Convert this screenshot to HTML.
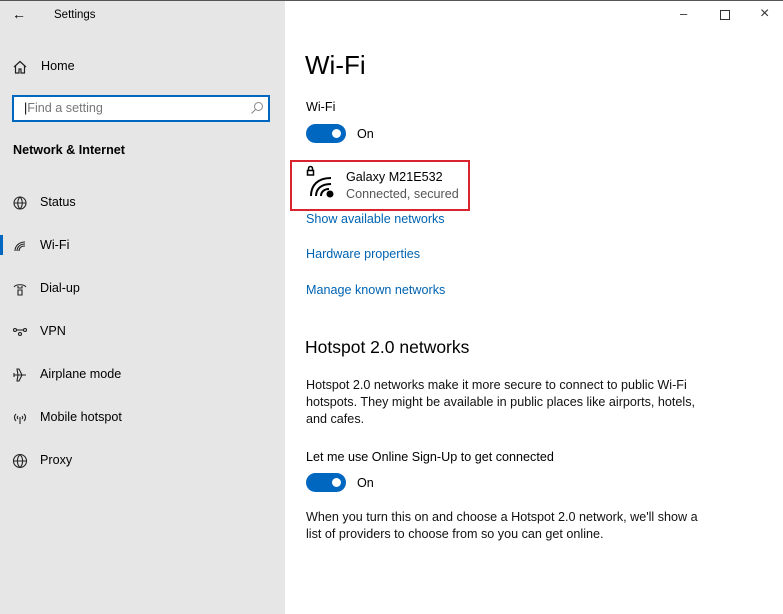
<!DOCTYPE html>
<html><head><style>
*{margin:0;padding:0;box-sizing:border-box}
body{width:783px;height:614px;overflow:hidden;font-family:"Liberation Sans",sans-serif;background:#fff;position:relative;color:#000}
.side{position:absolute;left:0;top:0;width:285px;height:614px;background:#e6e6e6;border-top:1px solid #555}
.top{position:absolute;left:285px;top:0;right:0;height:1px;background:#555}
.a{position:absolute;white-space:nowrap}
.s{font-size:12.6px}
.nav{font-size:12.6px;left:40px}
.ic{position:absolute;left:12px;width:16px;height:16px}
.link{color:#0063b1;font-size:12.6px;left:306px}
.tg{position:absolute;left:306px;width:40px;height:19px;border-radius:10px;background:#0067c0}
.tg:after{content:"";position:absolute;right:5px;top:5px;width:9px;height:9px;border-radius:50%;background:#fff}
p.a{font-size:12.6px;line-height:17px;color:#111}
</style></head><body>
<div class="side"></div><div class="top"></div>
<div class="a" style="left:12px;top:6px;font-size:14px">&#8592;</div>
<div class="a" style="left:54px;top:9px;font-size:11.5px">Settings</div>
<svg class="ic" style="top:59px" viewBox="0 0 16 16" fill="none" stroke="#222" stroke-width="1.2"><path d="M2 8 8 2.5 14 8M3.5 7v7h3.5v-4h2v4h3.5V7"/></svg>
<div class="a s" style="left:41px;top:59px">Home</div>
<div class="a" style="left:12px;top:95px;width:258px;height:27px;border:2px solid #0067c0;background:#fff"></div>
<div class="a" style="left:24px;top:101px;font-size:12.6px;color:#777"><span style="color:#000">|</span>Find a setting</div>
<svg class="a" style="left:250px;top:101px" width="14" height="14" viewBox="0 0 14 14" fill="none" stroke="#888"><circle cx="8.5" cy="5.5" r="4"/><path d="M5.5 8.5 1.5 12.5"/></svg>
<div class="a" style="left:13px;top:143px;font-size:12.6px;font-weight:bold">Network &amp; Internet</div>
<svg class="ic" style="top:195px" viewBox="0 0 16 16" fill="none" stroke="#222" stroke-width="1.1"><circle cx="8" cy="8" r="6"/><path d="M2 8h12M8 2c-3 3-3 9 0 12M8 2c3 3 3 9 0 12"/></svg>
<div class="a nav" style="top:195px">Status</div>
<div class="a" style="left:0;top:235px;width:3px;height:20px;background:#0067c0"></div>
<svg class="ic" style="top:238px" viewBox="0 0 16 16" fill="none" stroke="#222" stroke-width="1.1"><path d="M3 13c0-5 4-9 10-9M5 13c0-4 3-7 8-7M7 13c0-3 2-5 6-5"/></svg>
<div class="a nav" style="top:238px">Wi-Fi</div>
<svg class="ic" style="top:281px" viewBox="0 0 16 16" fill="none" stroke="#222" stroke-width="1.1"><path d="M2 6c2-3 10-3 12 0M6 5v2h4V5M6 9h4v5H6z"/></svg>
<div class="a nav" style="top:281px">Dial-up</div>
<svg class="ic" style="top:324px" viewBox="0 0 16 16" fill="none" stroke="#222" stroke-width="1.1"><circle cx="3" cy="6" r="1.5"/><circle cx="13" cy="6" r="1.5"/><circle cx="8" cy="10" r="1.5"/><path d="M5 6h6"/></svg>
<div class="a nav" style="top:324px">VPN</div>
<svg class="ic" style="top:367px" viewBox="0 0 16 16" fill="none" stroke="#222" stroke-width="1.1"><path d="M2 8h12M6 8 5 2h2l3 6-3 6H5l1-6M2 6v4"/></svg>
<div class="a nav" style="top:367px">Airplane mode</div>
<svg class="ic" style="top:410px" viewBox="0 0 16 16" fill="none" stroke="#222" stroke-width="1.1"><path d="M8 7v7M4 4c-2 2-2 5 0 7M12 4c2 2 2 5 0 7M6 6c-1 1-1 2 0 3M10 6c1 1 1 2 0 3"/></svg>
<div class="a nav" style="top:410px">Mobile hotspot</div>
<svg class="ic" style="top:453px" viewBox="0 0 16 16" fill="none" stroke="#222" stroke-width="1.1"><circle cx="8" cy="8" r="6.5"/><path d="M1.5 8h13M8 1.5c-3.5 3.5-3.5 9.5 0 13M8 1.5c3.5 3.5 3.5 9.5 0 13"/></svg>
<div class="a nav" style="top:453px">Proxy</div>

<div class="a" style="left:680px;top:6px;font-size:13px;color:#333">&#8211;</div>
<div class="a" style="left:720px;top:10px;width:10px;height:10px;border:1px solid #333"></div>
<div class="a" style="left:760px;top:5px;font-size:16px;color:#333">&#215;</div>

<div class="a" style="left:305px;top:50px;font-size:26px;font-weight:300">Wi-Fi</div>
<div class="a s" style="left:306px;top:100px">Wi-Fi</div>
<div class="tg" style="top:124px"></div>
<div class="a s" style="left:357px;top:127px">On</div>
<div class="a" style="left:290px;top:160px;width:180px;height:51px;border:2px solid #d9232e"></div>
<svg class="a" style="left:305px;top:165px" width="32" height="34" viewBox="0 0 32 34" fill="none" stroke="#000" stroke-width="2"><rect x="2.5" y="5.5" width="6" height="4.5" stroke-width="1.5"/><path d="M3.5 5.5V3.5a2 2 0 0 1 4 0v2" stroke-width="1.5"/><path d="M6 31c0-11 7-18 20-18M11 31c0-7 5-12 15-12M16 31c0-4 3-7 8-7"/><circle cx="25" cy="29" r="2.5" fill="#000"/></svg>
<div class="a s" style="left:346px;top:170px">Galaxy M21E532</div>
<div class="a s" style="left:346px;top:187px;color:#555">Connected, secured</div>
<div class="a link" style="top:212px">Show available networks</div>
<div class="a link" style="top:247px">Hardware properties</div>
<div class="a link" style="top:283px">Manage known networks</div>
<div class="a" style="left:305px;top:337px;font-size:17.5px">Hotspot 2.0 networks</div>
<p class="a" style="left:306px;top:377px">Hotspot 2.0 networks make it more secure to connect to public Wi-Fi<br>hotspots. They might be available in public places like airports, hotels,<br>and cafes.</p>
<div class="a s" style="left:306px;top:450px">Let me use Online Sign-Up to get connected</div>
<div class="tg" style="top:473px"></div>
<div class="a s" style="left:357px;top:476px">On</div>
<p class="a" style="left:306px;top:509px">When you turn this on and choose a Hotspot 2.0 network, we'll show a<br>list of providers to choose from so you can get online.</p>
</body></html>
